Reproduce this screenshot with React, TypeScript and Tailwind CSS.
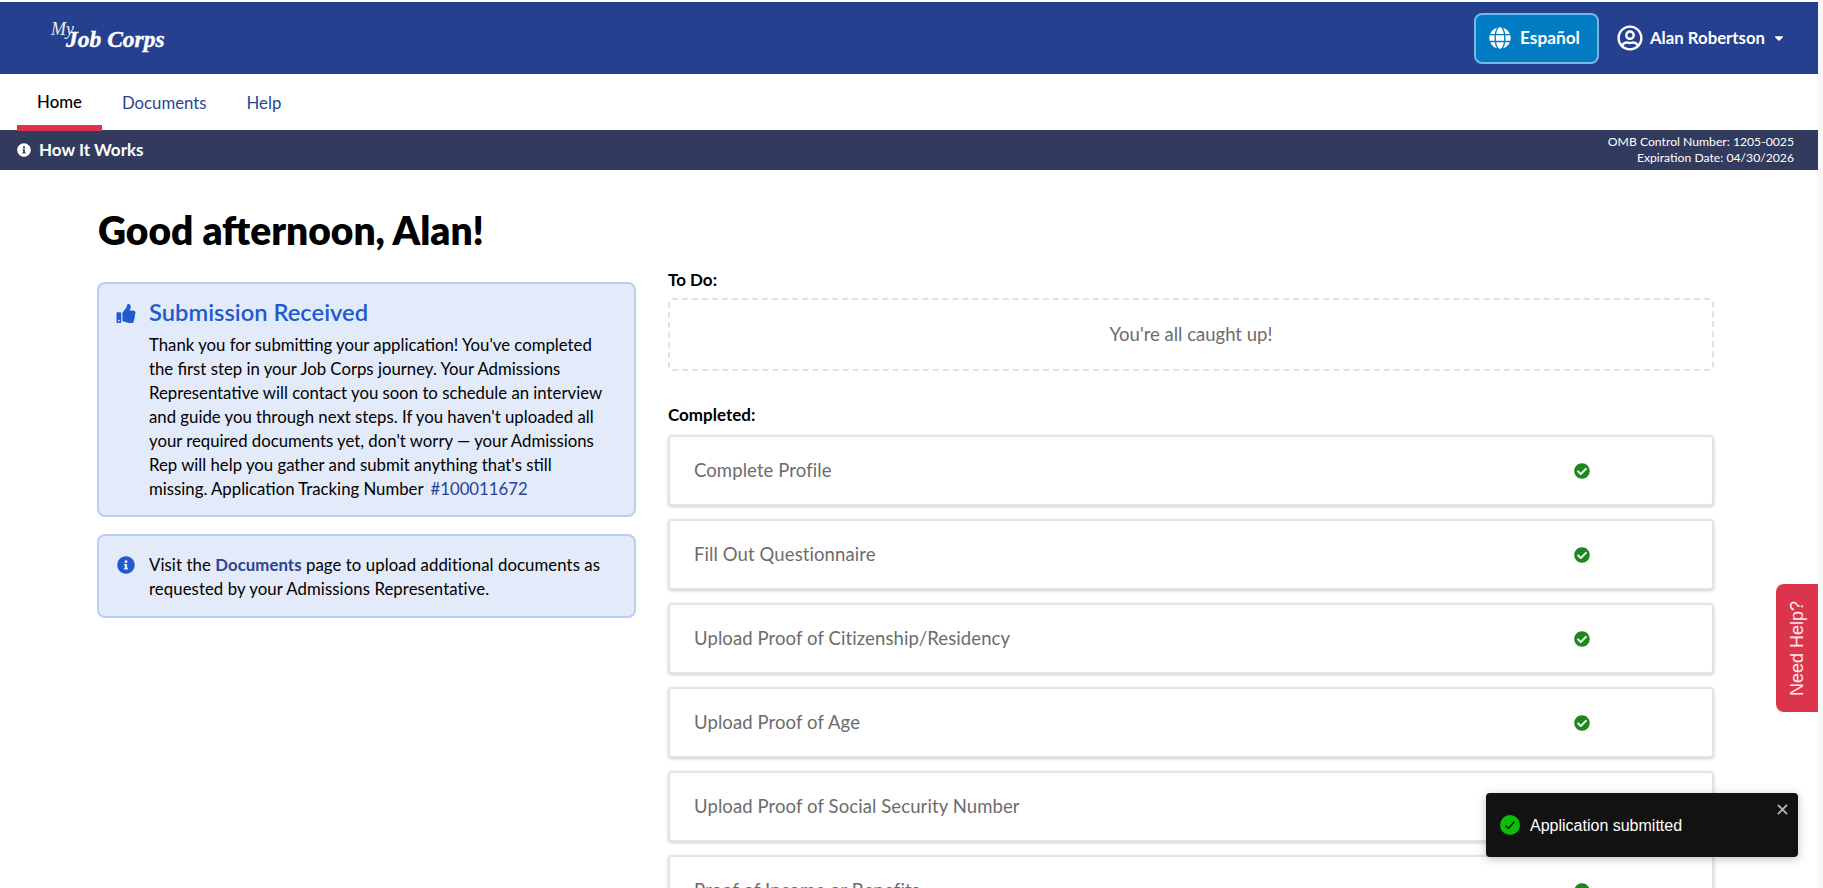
import { FaCaretDown, FaCheckCircle, FaGlobe, FaInfoCircle, FaRegUserCircle, FaThumbsUp } from "react-icons/fa";

const rows = [
  "Complete Profile",
  "Fill Out Questionnaire",
  "Upload Proof of Citizenship/Residency",
  "Upload Proof of Age",
  "Upload Proof of Social Security Number",
  "Proof of Income or Benefits",
];

export default function App() {
  return (
    <div className="relative flex h-screen overflow-hidden bg-white font-['Lato','Noto_Sans',sans-serif] text-[16.75px] text-black">
      <div className="min-w-0 flex-1">
        <header className="mt-[2px] flex h-[72px] items-center justify-between bg-[#25408f] pl-[50px] pr-[32px] text-white">
          <div className="relative flex h-[40px] w-[120px] items-center">
            <span className="absolute left-[1px] top-[-2px] font-['Liberation_Serif',serif] text-[18px] font-normal italic opacity-90">My</span>
            <span className="absolute left-[16px] top-[6px] whitespace-nowrap font-['Liberation_Serif',serif] text-[23.5px] font-bold italic leading-[30px] [-webkit-text-stroke:0.4px_white]">Job Corps</span>
          </div>
          <div className="flex items-center">
            <button className="flex h-[51px] w-[125px] items-center rounded-[8px] border-2 border-[#74b8e4] bg-[#017cc2] pl-[13px] text-[17.25px] font-bold text-white">
              <FaGlobe className="text-[22px]" />
              <span className="ml-[9px]">Español</span>
            </button>
            <FaRegUserCircle className="ml-[18px] text-[26px]" />
            <span className="ml-[7px] font-bold">Alan Robertson</span>
            <FaCaretDown className="ml-[7px] text-[14px]" />
          </div>
        </header>
        <nav className="flex h-[56px] bg-white pl-[17px]">
          <a className="flex h-[57px] w-[85px] items-center justify-center border-b-[6px] border-[#dc3148] pt-[5px] font-medium">Home</a>
          <a className="ml-[20px] flex h-[56px] items-center pt-[2px] text-[#2a4494]">Documents</a>
          <a className="ml-[40px] flex h-[56px] items-center pt-[2px] text-[#2a4494]">Help</a>
        </nav>
        <div className="flex h-[40px] items-center justify-between bg-[#323a5e] pl-[17px] pr-[24px] text-white">
          <div className="flex items-center font-bold">
            <FaInfoCircle className="text-[14px]" />
            <span className="ml-[8px] text-[17px]">How It Works</span>
          </div>
          <div className="text-right text-[12.2px] leading-[16px]">
            <div>OMB Control Number: 1205-0025</div>
            <div>Expiration Date: 04/30/2026</div>
          </div>
        </div>
        <main className="pl-[97px]">
          <h1 className="ml-[1px] mt-[33px] text-[38.9px] font-extrabold leading-[54px]">Good afternoon, Alan!</h1>
          <div className="flex items-start gap-[32px]">
            <div className="flex w-[539px] flex-col gap-[17px] pt-[25px]">
              <section className="flex h-[235px] rounded-[8px] border-2 border-[#b9cdf5] bg-[#e3eafa] pl-[17px] pr-[20px] pt-[12px]">
                <FaThumbsUp className="mt-[8px] w-[20px] shrink-0 text-[19px] text-[#1f5bcc]" />
                <div className="ml-[13px]">
                  <h2 className="text-[23.75px] font-semibold leading-[32px] text-[#1f5bcc]">Submission Received</h2>
                  <p className="mt-[5px] leading-[24px]">
                    Thank you for submitting your application! You've completed the first step in your Job Corps journey. Your Admissions Representative will contact you soon to schedule an interview and guide you through next steps. If you haven't uploaded all your required documents yet, don't worry — your Admissions Rep will help you gather and submit anything that's still missing. Application Tracking Number <span className="ml-[3px] text-[#2a4494]">#100011672</span>
                  </p>
                </div>
              </section>
              <section className="flex h-[84px] rounded-[8px] border-2 border-[#b9cdf5] bg-[#e3eafa] pl-[17px] pr-[20px] pt-[17px]">
                <FaInfoCircle className="mt-[3px] w-[20px] shrink-0 text-[18px] text-[#1f5bcc]" />
                <p className="ml-[13px] leading-[24px] tracking-[0.08px]">
                  Visit the <span className="font-bold text-[#2a4494]">Documents</span> page to upload additional documents as requested by your Admissions Representative.
                </p>
              </section>
            </div>
            <div className="w-[1046px] pt-[12px]">
              <h3 className="text-[17px] font-bold leading-[22px]">To Do:</h3>
              <div className="mt-[7px] flex h-[73px] items-center justify-center rounded-[4px] border-2 border-dashed border-[#e2e2e2] text-[18.5px] text-[#6c6c6c]">You're all caught up!</div>
              <h3 className="mt-[33px] text-[17px] font-bold leading-[22px]">Completed:</h3>
              <div className="mt-[9px] flex flex-col gap-[13px]">
                {rows.map((r) => (
                  <div key={r} className="flex h-[71px] shrink-0 items-center rounded-[4px] border-2 border-[#e4e4e4] bg-white pl-[24px] text-[18.5px] tracking-[0.1px] text-[#6c6c6c] shadow-[0_1px_3px_rgba(0,0,0,0.2)]">
                    <span className="w-[880px]">{r}</span>
                    <FaCheckCircle className="text-[16px] text-[#1d861d]" />
                  </div>
                ))}
              </div>
            </div>
          </div>
        </main>
      </div>
      <div className="w-[5px] shrink-0 bg-[#f8f8f8]" />
      <button className="absolute right-[5px] top-[584px] flex h-[128px] w-[42px] items-center justify-center rounded-l-[8px] bg-[#dc354b] pl-[2px] font-['Liberation_Sans',sans-serif] text-[18px] text-[#fbe9ec]">
        <span className="-rotate-90 whitespace-nowrap">Need Help?</span>
      </button>
      <div className="absolute left-[1486px] top-[793px] flex h-[64px] w-[312px] items-center rounded-[4px] bg-[#121212] pl-[14px] font-['Liberation_Sans',sans-serif] text-[16px] text-white shadow-[0_2px_10px_rgba(0,0,0,0.25)]">
        <span className="flex h-[20px] w-[20px] items-center justify-center rounded-full bg-[#08c008]">
          <svg viewBox="0 0 20 20" className="h-[20px] w-[20px]" fill="none" stroke="#121212" strokeWidth="1.5"><path d="M5.5 10.5l3 3 6-7" /></svg>
        </span>
        <span className="ml-[10px] mt-[1px]">Application submitted</span>
        <svg viewBox="0 0 12 12" className="absolute right-[10px] top-[11px] h-[11px] w-[11px]" fill="none" stroke="#b5b5b5" strokeWidth="2"><path d="M1 1l10 10M11 1L1 11" /></svg>
      </div>
    </div>
  );
}
